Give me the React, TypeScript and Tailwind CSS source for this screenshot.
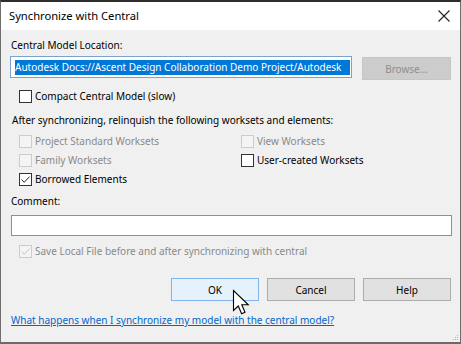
import React from "react";

const FONT = "font-['Noto_Sans','Open_Sans',sans-serif]";

type BoxProps = { checked?: boolean; disabled?: boolean };

function CheckBox({ checked = false, disabled = false }: BoxProps) {
  return (
    <span
      className={`flex h-[13px] w-[13px] shrink-0 items-center justify-center border ${
        disabled ? "border-[#cccccc] bg-[#f4f4f4]" : "border-[#333333] bg-white"
      }`}
    >
      {checked ? (
        <svg width="11" height="11" viewBox="0 0 11 11">
          <path
            d="M1.5 5.5 L4.2 8.3 L9.6 2.6"
            fill="none"
            stroke={disabled ? "#c4c4c4" : "#222222"}
            strokeWidth="1"
          />
        </svg>
      ) : null}
    </span>
  );
}

function CheckRow({
  label,
  checked,
  disabled,
}: BoxProps & { label: string }) {
  return (
    <div className="flex h-[16px] items-center gap-[3px]">
      <CheckBox checked={checked} disabled={disabled} />
      <span className={disabled ? "text-[#8a8a8a]" : "text-black"}>{label}</span>
    </div>
  );
}

export default function App() {
  return (
    <div
      className={`${FONT} relative flex h-[344px] w-[461px] flex-col overflow-hidden border-x border-t-2 border-b-2 border-x-[#6e6e6e] border-t-[#2e2e2e] border-b-[#6a6a6a] bg-[#f0f0f0] text-[10px] leading-[16px] text-black`}
    >
      <div className="flex h-[28px] shrink-0 items-center justify-between bg-white pl-[8px] pr-[10px]">
        <span className="text-[11.2px]">Synchronize with Central</span>
        <svg width="12" height="12" viewBox="0 0 12 12">
          <path d="M0.5 0.5 L11.5 11.5 M11.5 0.5 L0.5 11.5" stroke="#222222" strokeWidth="1.1" />
        </svg>
      </div>

      <div className="flex flex-1 flex-col pl-[9px] pr-[8px]">
        <div className="ml-[1px] mt-[7px]">Central Model Location:</div>

        <div className="mt-[3px] flex items-start gap-[10px]">
          <div className="flex h-[22px] w-[342px] shrink-0 items-center overflow-hidden border border-[#7aa3cf] bg-white pl-[4px] pr-[1px]">
            <span className="block h-[15px] w-full overflow-hidden whitespace-nowrap bg-[#0078d7] leading-[15px] text-white">
              Autodesk Docs://Ascent Design Collaboration Demo Project/Autodesk
            </span>
          </div>
          <button
            type="button"
            disabled
            className="mt-[1px] h-[23px] w-[89px] shrink-0 border border-[#c6c6c6] bg-[#cccccc] text-[#8e8e8e]"
          >
            Browse...
          </button>
        </div>

        <div className="ml-[9px] mt-[8px]">
          <CheckRow label="Compact Central Model (slow)" />
        </div>

        <div className="ml-[2px] mt-[8px]">
          After synchronizing, relinquish the following worksets and elements:
        </div>

        <div className="ml-[9px] mt-[5px] grid grid-cols-[222px_1fr] gap-y-[3px]">
          <CheckRow label="Project Standard Worksets" disabled />
          <CheckRow label="View Worksets" disabled />
          <CheckRow label="Family Worksets" disabled />
          <CheckRow label="User-created Worksets" />
          <CheckRow label="Borrowed Elements" checked />
        </div>

        <div className="ml-[1px] mt-[6px]">Comment:</div>

        <div className="ml-[1px] mt-[6px] h-[21px] w-[441px] border border-[#8f8f8f] bg-white" />

        <div className="ml-[9px] mt-[7px]">
          <CheckRow label="Save Local File before and after synchronizing with central" checked disabled />
        </div>

        <div className="mt-[19px] flex justify-end gap-[8px] pr-[1px]">
          <button
            type="button"
            className="h-[23px] w-[88px] border border-[#7eb4ea] bg-[#e5f1fb] text-black"
          >
            OK
          </button>
          <button
            type="button"
            className="h-[23px] w-[88px] border border-[#adadad] bg-[#e1e1e1] text-black"
          >
            Cancel
          </button>
          <button
            type="button"
            className="h-[23px] w-[88px] border border-[#adadad] bg-[#e1e1e1] text-black"
          >
            Help
          </button>
        </div>

        <div className="ml-[1px] mt-[11px]">
          <span className="text-[#0066cc] underline">
            What happens when I synchronize my model with the central model?
          </span>
        </div>
      </div>

      <svg className="absolute bottom-[1px] right-[1px]" width="8" height="8" viewBox="0 0 8 8">
        <rect x="6" y="2" width="1" height="1" fill="#b0b0b0" />
        <rect x="4" y="4" width="1" height="1" fill="#b0b0b0" />
        <rect x="6" y="4" width="1" height="1" fill="#b0b0b0" />
        <rect x="2" y="6" width="1" height="1" fill="#b0b0b0" />
        <rect x="4" y="6" width="1" height="1" fill="#b0b0b0" />
        <rect x="6" y="6" width="1" height="1" fill="#b0b0b0" />
      </svg>

      <svg className="absolute left-[231px] top-[287px]" width="20" height="28" viewBox="0 0 20 28">
        <path
          d="M1.5 1.5 L1.5 21.5 L6.3 17 L9.6 24.8 L13 23.3 L9.8 15.8 L16.3 15.8 Z"
          fill="white"
          stroke="black"
          strokeWidth="1.1"
          strokeLinejoin="miter"
        />
      </svg>
    </div>
  );
}
